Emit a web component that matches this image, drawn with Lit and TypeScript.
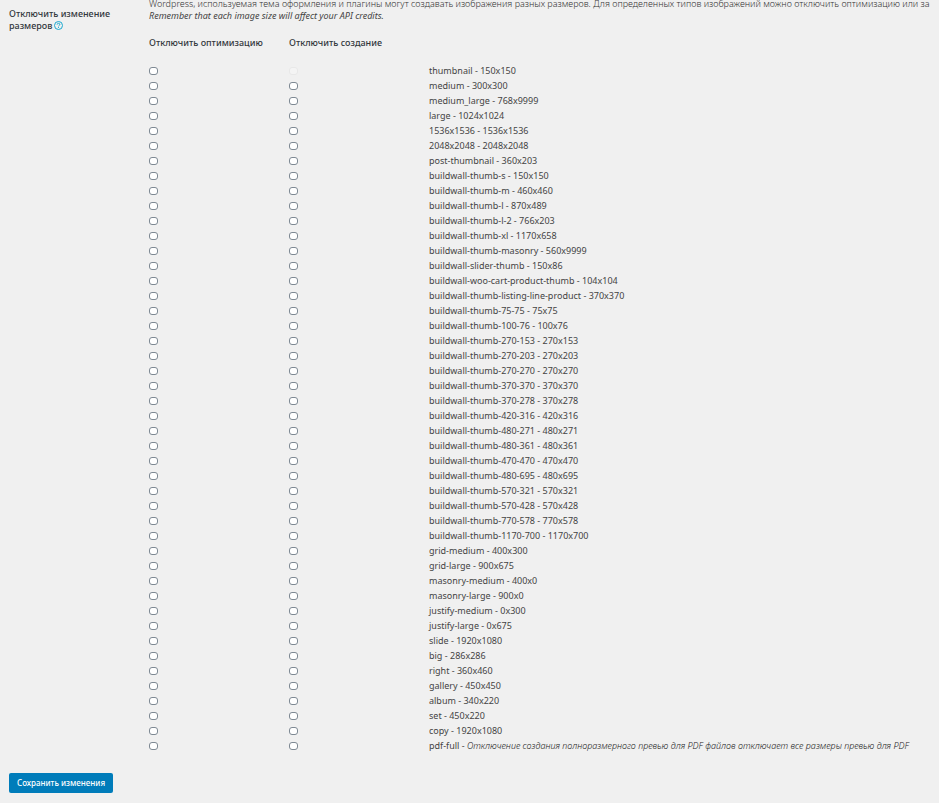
import { LitElement, html, css, nothing } from "lit";
import { customElement } from "lit/decorators.js";

const SIZES: [string, string][] = [
  ["thumbnail", "150x150"],
  ["medium", "300x300"],
  ["medium_large", "768x9999"],
  ["large", "1024x1024"],
  ["1536x1536", "1536x1536"],
  ["2048x2048", "2048x2048"],
  ["post-thumbnail", "360x203"],
  ["buildwall-thumb-s", "150x150"],
  ["buildwall-thumb-m", "460x460"],
  ["buildwall-thumb-l", "870x489"],
  ["buildwall-thumb-l-2", "766x203"],
  ["buildwall-thumb-xl", "1170x658"],
  ["buildwall-thumb-masonry", "560x9999"],
  ["buildwall-slider-thumb", "150x86"],
  ["buildwall-woo-cart-product-thumb", "104x104"],
  ["buildwall-thumb-listing-line-product", "370x370"],
  ["buildwall-thumb-75-75", "75x75"],
  ["buildwall-thumb-100-76", "100x76"],
  ["buildwall-thumb-270-153", "270x153"],
  ["buildwall-thumb-270-203", "270x203"],
  ["buildwall-thumb-270-270", "270x270"],
  ["buildwall-thumb-370-370", "370x370"],
  ["buildwall-thumb-370-278", "370x278"],
  ["buildwall-thumb-420-316", "420x316"],
  ["buildwall-thumb-480-271", "480x271"],
  ["buildwall-thumb-480-361", "480x361"],
  ["buildwall-thumb-470-470", "470x470"],
  ["buildwall-thumb-480-695", "480x695"],
  ["buildwall-thumb-570-321", "570x321"],
  ["buildwall-thumb-570-428", "570x428"],
  ["buildwall-thumb-770-578", "770x578"],
  ["buildwall-thumb-1170-700", "1170x700"],
  ["grid-medium", "400x300"],
  ["grid-large", "900x675"],
  ["masonry-medium", "400x0"],
  ["masonry-large", "900x0"],
  ["justify-medium", "0x300"],
  ["justify-large", "0x675"],
  ["slide", "1920x1080"],
  ["big", "286x286"],
  ["right", "360x460"],
  ["gallery", "450x450"],
  ["album", "340x220"],
  ["set", "450x220"],
  ["copy", "1920x1080"],
  ["pdf-full", ""],
];

@customElement("app-root")
export class AppRoot extends LitElement {
  static styles = css`
    :host {
      display: block;
      box-sizing: border-box;
      min-height: 100vh;
      overflow: hidden;
      background: #f0f0f0;
      color: #444;
      font: 9px/12px "Noto Sans", "Open Sans", sans-serif;
    }
    .setting {
      display: grid;
      grid-template-columns: 140px minmax(0, 1fr);
      padding-left: 9px;
    }
    .title {
      margin: 8px 0 0;
      padding-right: 24px;
      color: #32373c;
      font-size: 9px;
      line-height: 12px;
      font-weight: 500;
    }
    .help {
      display: inline-block;
      margin-left: 2px;
      color: #1aa9d0;
      vertical-align: -1px;
    }
    .help svg {
      display: block;
    }
    .intro {
      margin: -2px 0 0;
      white-space: nowrap;
    }
    .lead {
      color: #333;
      font-weight: 335;
    }
    .sizes {
      margin-top: 13px;
      width: 100%;
      border-collapse: collapse;
      table-layout: fixed;
    }
    .sizes th {
      height: 28px;
      padding: 2px 0 12px;
      box-sizing: border-box;
      text-align: left;
      vertical-align: top;
      font-weight: 500;
      color: #32373c;
    }
    .choice {
      width: 140px;
    }
    .sizes td {
      height: 15px;
      padding: 0;
      line-height: 15px;
      white-space: nowrap;
    }
    .note {
      color: #222;
      font-weight: 260;
    }
    .box {
      appearance: none;
      display: block;
      box-sizing: border-box;
      width: 9px;
      height: 8px;
      margin: 0;
      border: 1px solid #7e8993;
      border-radius: 3px;
      background: #fff;
    }
    .box:checked {
      background: #007cba;
    }
    .box:disabled {
      border-color: #e8e8e8;
      background: #f4f4f4;
    }
    .actions {
      padding: 20px 9px 10px;
    }
    .save {
      display: block;
      height: 20px;
      padding: 0 8px;
      border: 0;
      border-radius: 2px;
      background: #007cba;
      color: #fff;
      font: 500 8px/20px "Noto Sans", "Open Sans", sans-serif;
      cursor: pointer;
    }
  `;

  private row([name, size]: [string, string], i: number) {
    return html`<tr>
      <td><input class="box" type="checkbox" id="optimize-${i}" /></td>
      <td>
        <input
          class="box"
          type="checkbox"
          aria-label="Отключить создание: ${name}"
          ?disabled=${i === 0}
        />
      </td>
      <td>
        <label for="optimize-${i}"
          >${name} - ${size}${size
            ? nothing
            : html`<em class="note"
                >Отключение создания полноразмерного превью для PDF файлов отключает все размеры превью для PDF</em
              >`}</label
        >
      </td>
    </tr>`;
  }

  render() {
    return html`
      <section class="setting">
        <h2 class="title">
          Отключить изменение размеров<a class="help" href="#help" aria-label="Справка">
            <svg width="9" height="9" viewBox="0 0 9 9" fill="none" stroke="currentColor">
              <circle cx="4.5" cy="4.5" r="4" />
              <path d="M3.1 3.6Q3.2 2.3 4.5 2.3Q5.9 2.4 5.8 3.5Q5.7 4.1 5 4.5Q4.5 4.8 4.5 5.4M4.5 6.1V7" />
            </svg>
          </a>
        </h2>
        <div>
          <p class="intro">
            <span class="lead"
              >Wordpress, используемая тема оформления и плагины могут создавать изображения разных размеров. Для определенных типов изображений можно отключить оптимизацию или за</span
            ><br />
            <em>Remember that each image size will affect your API credits.</em>
          </p>
          <table class="sizes">
            <thead>
              <tr>
                <th class="choice">Отключить оптимизацию</th>
                <th class="choice">Отключить создание</th>
                <th></th>
              </tr>
            </thead>
            <tbody>
              ${SIZES.map((s, i) => this.row(s, i))}
            </tbody>
          </table>
        </div>
      </section>
      <div class="actions"><button class="save" type="button">Сохранить изменения</button></div>
    `;
  }
}
